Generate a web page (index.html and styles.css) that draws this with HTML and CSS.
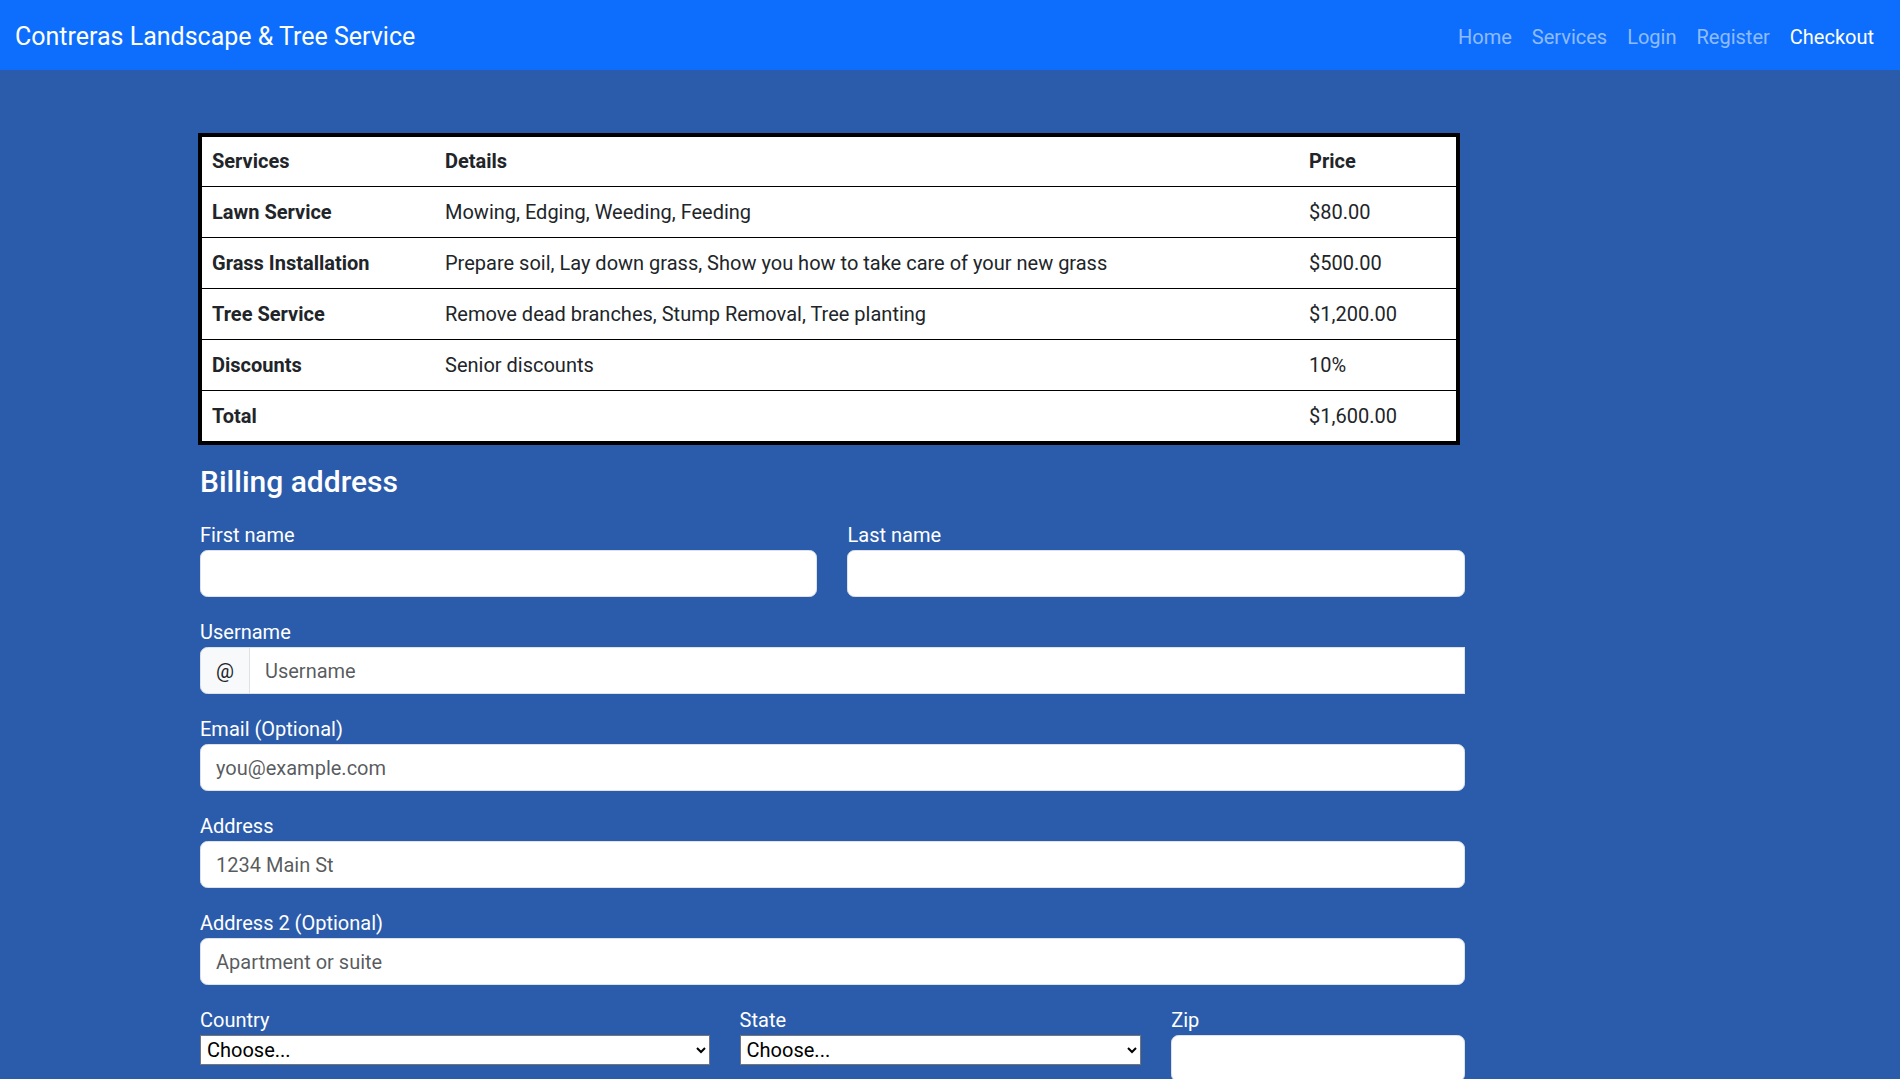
FILE: index.html
```html
<!DOCTYPE html>
<html lang="en">
<head>
<meta charset="utf-8">
<title>Checkout - Contreras Landscape &amp; Tree Service</title>
<link rel="stylesheet" href="styles.css">
</head>
<body>
<nav class="navbar">
  <a class="brand" href="#">Contreras Landscape &amp; Tree Service</a>
  <ul class="nav-links">
    <li><a class="nav-link" href="#">Home</a></li>
    <li><a class="nav-link" href="#">Services</a></li>
    <li><a class="nav-link" href="#">Login</a></li>
    <li><a class="nav-link" href="#">Register</a></li>
    <li><a class="nav-link active" href="#">Checkout</a></li>
  </ul>
</nav>

<main class="main">
  <table class="price-table">
    <thead>
      <tr>
        <th class="col-service">Services</th>
        <th>Details</th>
        <th class="col-price">Price</th>
      </tr>
    </thead>
    <tbody>
      <tr>
        <th>Lawn Service</th>
        <td>Mowing, Edging, Weeding, Feeding</td>
        <td>$80.00</td>
      </tr>
      <tr>
        <th>Grass Installation</th>
        <td>Prepare soil, Lay down grass, Show you how to take care of your new grass</td>
        <td>$500.00</td>
      </tr>
      <tr>
        <th>Tree Service</th>
        <td>Remove dead branches, Stump Removal, Tree planting</td>
        <td>$1,200.00</td>
      </tr>
      <tr>
        <th>Discounts</th>
        <td>Senior discounts</td>
        <td>10%</td>
      </tr>
      <tr>
        <th>Total</th>
        <td></td>
        <td>$1,600.00</td>
      </tr>
    </tbody>
  </table>

  <h4 class="section-title">Billing address</h4>

  <form class="billing-form">
    <div class="field span-6">
      <label class="field-label" for="firstName">First name</label>
      <input class="form-control" type="text" id="firstName">
    </div>
    <div class="field span-6">
      <label class="field-label" for="lastName">Last name</label>
      <input class="form-control" type="text" id="lastName">
    </div>

    <div class="field span-12">
      <label class="field-label" for="username">Username</label>
      <div class="input-group">
        <span class="input-addon">@</span>
        <input class="form-control" type="text" id="username" placeholder="Username">
      </div>
    </div>

    <div class="field span-12">
      <label class="field-label" for="email">Email (Optional)</label>
      <input class="form-control" type="email" id="email" placeholder="you@example.com">
    </div>

    <div class="field span-12">
      <label class="field-label" for="address">Address</label>
      <input class="form-control" type="text" id="address" placeholder="1234 Main St">
    </div>

    <div class="field span-12">
      <label class="field-label" for="address2">Address 2 (Optional)</label>
      <input class="form-control" type="text" id="address2" placeholder="Apartment or suite">
    </div>

    <div class="field span-5">
      <label class="field-label" for="country">Country</label>
      <select class="plain-select" id="country">
        <option>Choose...</option>
        <option>United States</option>
      </select>
    </div>
    <div class="field span-4">
      <label class="field-label" for="state">State</label>
      <select class="plain-select" id="state">
        <option>Choose...</option>
        <option>California</option>
      </select>
    </div>
    <div class="field span-3">
      <label class="field-label" for="zip">Zip</label>
      <input class="form-control" type="text" id="zip">
    </div>
  </form>
</main>
</body>
</html>
```

FILE: styles.css
```css
html {
  scrollbar-width: none;
}

body {
  margin: 0;
  background: #2b5cab;
  font-family: Roboto, "Liberation Sans", Arial, sans-serif;
  font-size: 20px;
  line-height: 30px;
  color: #212529;
}

/* Navbar */
.navbar {
  display: flex;
  align-items: center;
  justify-content: space-between;
  box-sizing: border-box;
  height: 70px;
  padding: 4px 16px 0 15px;
  background: #0d6efd;
}

.brand {
  font-size: 25px;
  line-height: 37.5px;
  color: #fff;
  text-decoration: none;
}

.nav-links {
  display: flex;
  list-style: none;
  margin: 0;
  padding: 0;
}

.nav-link {
  display: block;
  padding: 10px;
  font-size: 20px;
  line-height: 30px;
  color: rgba(255, 255, 255, 0.55);
  text-decoration: none;
}

.nav-link.active {
  color: #fff;
}

/* Main */
.main {
  width: 1265px;
  margin-left: 200px;
  padding: 63px 0 60px;
}

/* Price table */
.price-table {
  box-sizing: border-box;
  width: 1262px;
  margin: 0 0 19px -2px;
  border: 4px solid #000;
  border-collapse: separate;
  border-spacing: 0;
  background: #fff;
  color: #212529;
}

.price-table th,
.price-table td {
  padding: 10px;
  line-height: 30px;
  text-align: left;
  vertical-align: top;
  border-bottom: 1px solid #000;
}

.price-table thead th {
  padding: 9px 10px 10px;
}

.price-table th {
  font-weight: 700;
}

.price-table tbody tr:last-child th,
.price-table tbody tr:last-child td {
  border-bottom: 0;
}

.col-service {
  width: 213px;
}

.col-price {
  width: 137px;
}

/* Heading */
.section-title {
  margin: 0 0 20px;
  font-size: 30px;
  line-height: 36px;
  font-weight: 500;
  color: #fff;
}

/* Form */
.billing-form {
  display: grid;
  grid-template-columns: repeat(12, 1fr);
  column-gap: 30px;
  row-gap: 20px;
}

.span-12 { grid-column: span 12; }
.span-6 { grid-column: span 6; }
.span-5 { grid-column: span 5; }
.span-4 { grid-column: span 4; }
.span-3 { grid-column: span 3; }

.field-label {
  display: block;
  font-size: 20px;
  line-height: 30px;
  color: #fff;
}

.form-control {
  display: block;
  box-sizing: border-box;
  width: 100%;
  height: 47px;
  margin: 0;
  padding: 0 15px;
  font-family: inherit;
  font-size: 20px;
  color: #212529;
  background: #fff;
  border: 1px solid #dee2e6;
  border-radius: 7.5px;
  outline: none;
}

.form-control::placeholder {
  color: rgba(33, 37, 41, 0.75);
}

.input-group {
  display: flex;
}

.input-addon {
  display: flex;
  align-items: center;
  box-sizing: border-box;
  height: 47px;
  padding: 0 15px;
  font-size: 20px;
  color: #212529;
  background: #f8f9fa;
  border: 1px solid #dee2e6;
  border-radius: 7.5px 0 0 7.5px;
}

.input-group .form-control {
  flex: 1;
  margin-left: -1px;
  border-radius: 0;
}

.plain-select {
  display: block;
  box-sizing: border-box;
  width: 100%;
  height: 30px;
  margin: 0;
  padding: 0 2px;
  font-family: inherit;
  font-size: 20px;
  color: #000;
  background: #fff;
  border: 1px solid #767676;
  border-radius: 0;
}
```
